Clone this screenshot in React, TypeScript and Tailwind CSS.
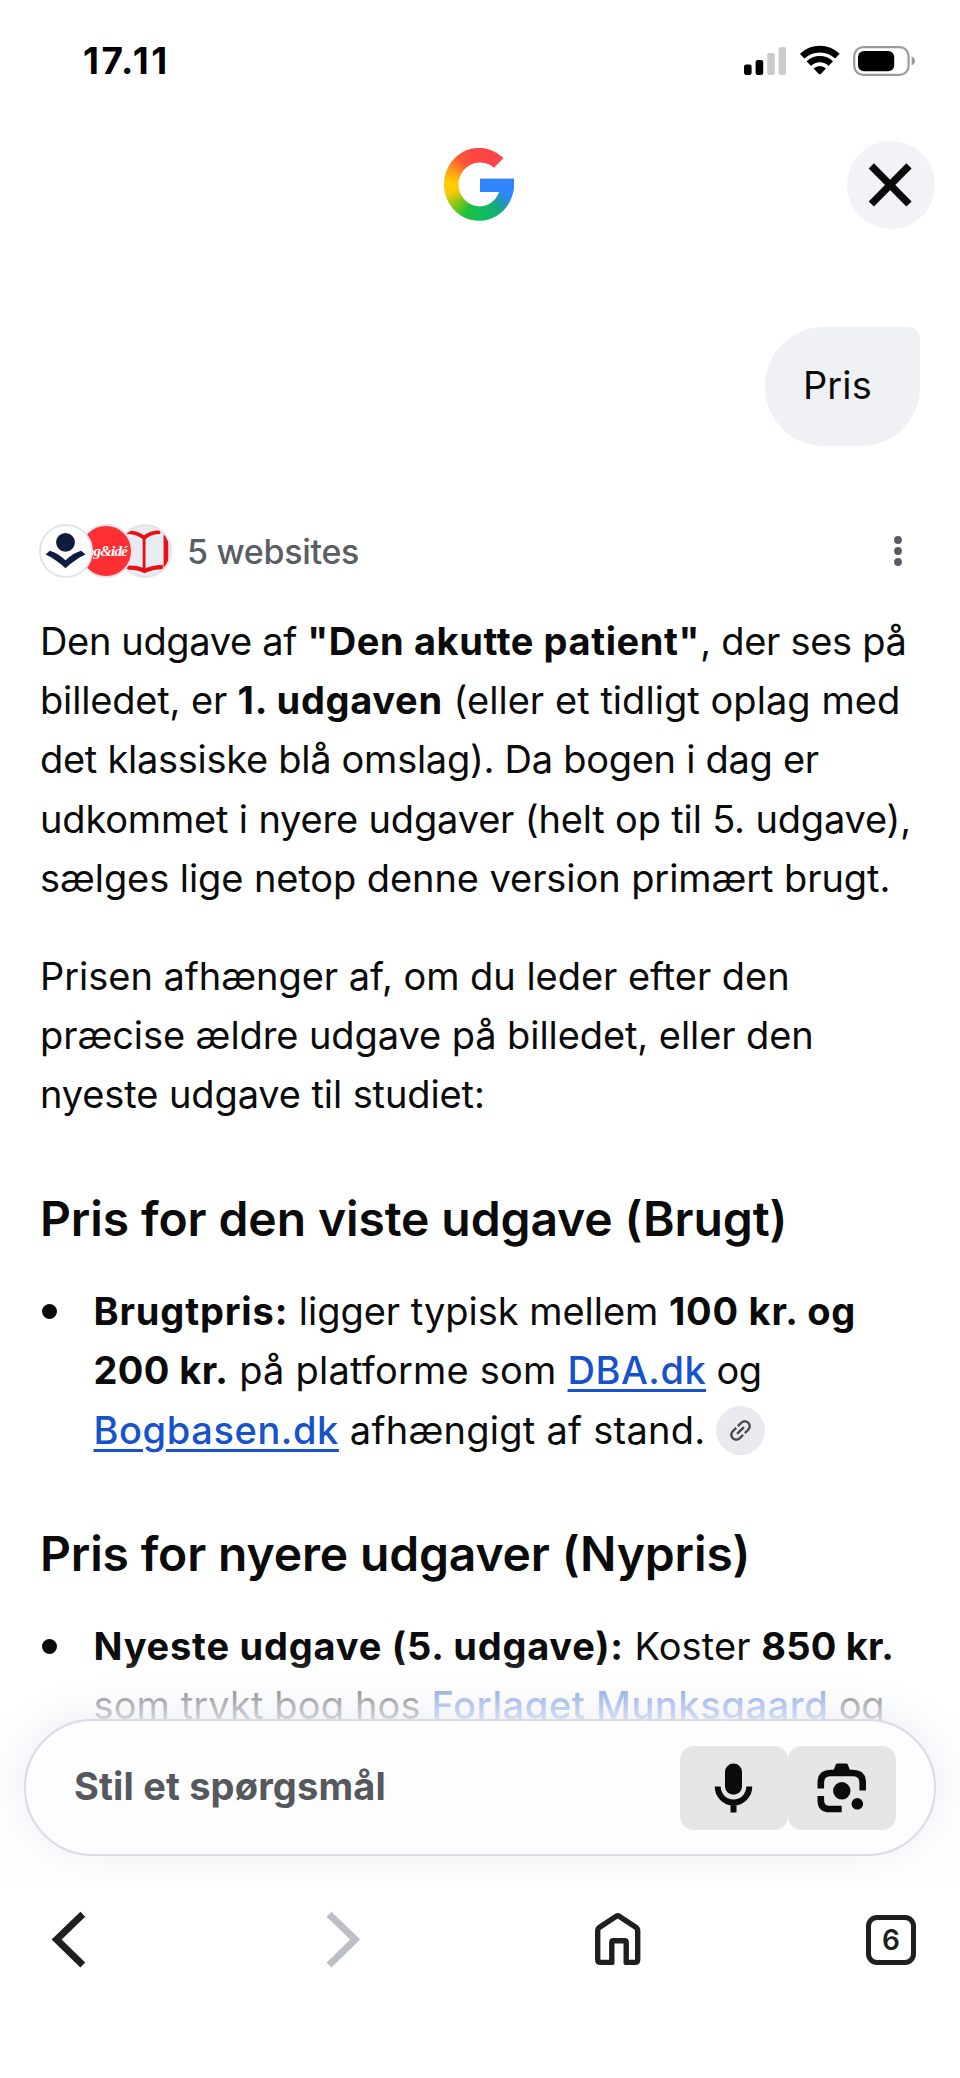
import type { ReactNode } from "react";

function SignalIcon() {
  return (
    <svg width="42" height="28" viewBox="0 0 42 28">
      <rect x="0" y="17.5" width="7.6" height="10.5" rx="2.2" fill="#000" />
      <rect x="11.6" y="13" width="7.6" height="15" rx="2.2" fill="#000" />
      <rect x="23.2" y="6" width="7.6" height="22" rx="2.2" fill="#cbcbcb" />
      <rect x="34.6" y="0" width="7.4" height="28" rx="2.2" fill="#cbcbcb" />
    </svg>
  );
}

function WifiIcon() {
  return (
    <svg width="40" height="30" viewBox="0 0 40 30" fill="none" stroke="#000" strokeWidth="6.4">
      <path d="M2.2 11.2 A25.4 25.4 0 0 1 37.4 11.2" strokeWidth="6.6" />
      <path d="M8.8 18.6 A15.8 15.8 0 0 1 30.8 18.6" />
      <path d="M13.6 23.6 A8.8 8.8 0 0 1 26 23.6 L20.8 28.9 Q19.8 29.8 18.8 28.9 Z" fill="#000" stroke="none" />
    </svg>
  );
}

function BatteryIcon() {
  return (
    <svg width="63" height="30" viewBox="0 0 63 30">
      <rect x="1.2" y="1.2" width="54.4" height="27.6" rx="9" fill="none" stroke="#9b9b9b" strokeWidth="2.2" />
      <rect x="5" y="5" width="36.2" height="20.2" rx="6" fill="#000" />
      <path d="M58.6 10.6 Q62 12 62 15 Q62 18 58.6 19.4 Z" fill="#9b9b9b" />
    </svg>
  );
}

function StatusBar() {
  return (
    <div className="flex h-[120px] justify-between pl-[83px] pr-[44px]">
      <span className="mt-[38px] text-[37px] leading-[46px] font-bold tracking-[2.6px] text-black">17.11</span>
      <div className="mt-[45px] flex h-[31px] items-start">
        <div className="mt-[2px]"><SignalIcon /></div>
        <div className="ml-[14px]"><WifiIcon /></div>
        <div className="ml-[13px] mt-[0.5px]"><BatteryIcon /></div>
      </div>
    </div>
  );
}

function Header() {
  return (
    <header className="grid h-[129px] grid-cols-[1fr_70px_1fr] items-center pr-[2px]">
      <span />
      <div
        role="img"
        aria-label="Google"
        className="h-[73px] w-[70px] [background:linear-gradient(#3186ff,#3186ff)_36px_30px/34px_14px_no-repeat,conic-gradient(from_0deg_at_36px_36.5px,#ff4641_0deg,#fc4450_50deg,#3186ff_70deg,#3186ff_108deg,#2095b8_128deg,#13b070_148deg,#0fbc5f_175deg,#1fc03c_205deg,#8cc714_232deg,#fdc907_255deg,#ffcc00_275deg,#ff9a1c_297deg,#ff5a33_320deg,#ff4641_345deg,#ff4641_360deg)] [clip-path:path('M59.4,10.2_A35,36.5_0_1_0_70,37_L70,30.7_L36,30.7_L36,44_L55,44_A20.6,21.5_0_0_1_36,58.4_A21.4,22_0_1_1_50,19.8_Z')]"
      />
      <button className="mr-[23px] flex size-[88px] items-center justify-center justify-self-end rounded-full bg-[#f2f2f7]">
        <svg width="48" height="48" viewBox="0 0 48 48" stroke="#0b0b0c" strokeWidth="7.4">
          <path d="M4.3 4.9 L42 43 M42 4.9 L4.3 43" />
        </svg>
      </button>
    </header>
  );
}

function SourceAvatars() {
  return (
    <div className="flex">
      <div className="z-20 size-[54px] overflow-hidden rounded-full border-[2.5px] border-[#e1e4eb] bg-white">
        <svg width="49" height="49" viewBox="0 0 48 48" fill="#0e1c40">
          <circle cx="24" cy="16" r="9.2" />
          <path d="M4.5 28 L8.6 24.2 C14 25.6 19 29 24 33.6 C29 29 34 25.6 39.4 24.2 L43.5 28 C36 31.5 29.8 36 24 41.5 C18.2 36 12 31.5 4.5 28 Z" />
        </svg>
      </div>
      <div className="z-10 -ml-[14.5px] flex size-[54px] items-center justify-center overflow-hidden rounded-full border-[2.5px] border-[#e1e4eb] bg-[#fd2f33]">
        <span className="-translate-x-[2px] whitespace-nowrap font-['Liberation_Serif',serif] text-[15px] leading-none font-bold tracking-[-0.8px] text-white italic">bog&amp;idé</span>
      </div>
      <div className="-ml-[14.5px] size-[54px] overflow-hidden rounded-full border-[2.5px] border-[#e1e4eb] bg-[#e9ebf2]">
        <svg width="49" height="49" viewBox="0 0 48 48" fill="none" stroke="#e90f12">
          <path d="M6 6 C13 6 19.5 8 23.6 11.5 C27.5 8 33 6 39.5 6" strokeWidth="3.8" />
          <path d="M23.6 10 V43" strokeWidth="2.8" />
          <path d="M5 41 C13 40.4 19 41.4 24 44 C29 41.4 35 40.4 42 40" strokeWidth="4.2" />
          <path d="M45 8 V42" strokeWidth="4.6" />
        </svg>
      </div>
    </div>
  );
}

function Line({ children }: { children: ReactNode }) {
  return <span className="block whitespace-nowrap">{children}</span>;
}

function Heading({ children, className }: { children: ReactNode; className: string }) {
  return <h2 className={`mt-[62.5px] whitespace-nowrap text-[48px] leading-[64px] font-semibold ${className}`}>{children}</h2>;
}

function Bullet({ children }: { children: ReactNode }) {
  return (
    <li className="mt-[31px] flex">
      <span className="mt-[22px] mr-[37px] ml-[1.5px] size-[15px] shrink-0 rounded-full bg-[#0b0b0c]" />
      <div>{children}</div>
    </li>
  );
}

const link = "font-medium text-[#1652cc] underline decoration-[2.5px] underline-offset-[5px]";

function Answer() {
  return (
    <article className="px-[40px] text-[38px] leading-[59.2px] text-[#0b0b0c]">
      <p>
        <Line>
          <span className="tracking-[-0.35px]">Den udgave af </span>
          <b className="tracking-[0.6px]">"Den akutte patient"</b>
          <span className="tracking-[-0.3px]">, der ses på</span>
        </Line>
        <Line>
          <span className="tracking-[-0.16px]">billedet, er </span>
          <b className="tracking-[0.68px]">1. udgaven</b>
          <span className="tracking-[0.05px]"> (eller et tidligt oplag med</span>
        </Line>
        <Line><span className="tracking-[-0.28px]">det klassiske blå omslag). Da bogen i dag er</span></Line>
        <Line><span className="tracking-[-0.17px]">udkommet i nyere udgaver (helt op til 5. udgave),</span></Line>
        <Line><span className="tracking-[-0.08px]">sælges lige netop denne version primært brugt.</span></Line>
      </p>
      <p className="mt-[39px]">
        <Line><span className="tracking-[-0.04px]">Prisen afhænger af, om du leder efter den</span></Line>
        <Line><span className="tracking-[-0.08px]">præcise ældre udgave på billedet, eller den</span></Line>
        <Line><span className="tracking-[-0.1px]">nyeste udgave til studiet:</span></Line>
      </p>
      <Heading className="tracking-[-0.1px]">Pris for den viste udgave (Brugt)</Heading>
      <ul>
        <Bullet>
          <Line>
            <b className="tracking-[0.85px]">Brugtpris:</b>
            <span className="tracking-[-0.03px]"> ligger typisk mellem </span>
            <b className="tracking-[0.75px]">100 kr. og</b>
          </Line>
          <Line>
            <b className="tracking-[0.4px]">200 kr.</b>
            <span className="tracking-[0.22px]"> på platforme som </span>
            <a className={`${link} tracking-[0.5px]`}>DBA.dk</a>
            <span className="tracking-[-0.4px]"> og</span>
          </Line>
          <Line>
            <a className={`${link} tracking-[0.6px]`}>Bogbasen.dk</a>
            <span className="tracking-[0.25px]"> afhængigt af stand.</span>
            <span className="-my-2 ml-[11px] inline-flex size-[49px] items-center justify-center rounded-full bg-[#e8eaf0] align-[-1.5px]">
              <svg width="29" height="29" viewBox="0 0 24 24" fill="#45474b" className="-rotate-45">
                <path d="M3.9 12c0-1.71 1.39-3.1 3.1-3.1h4V7H7c-2.76 0-5 2.24-5 5s2.24 5 5 5h4v-1.9H7c-1.71 0-3.1-1.39-3.1-3.1zM8 13h8v-2H8v2zm9-6h-4v1.9h4c1.71 0 3.1 1.39 3.1 3.1s-1.39 3.1-3.1 3.1h-4V17h4c2.76 0 5-2.24 5-5s-2.24-5-5-5z" />
              </svg>
            </span>
          </Line>
        </Bullet>
      </ul>
      <Heading className="tracking-[-0.15px]">Pris for nyere udgaver (Nypris)</Heading>
      <ul>
        <Bullet>
          <Line>
            <b className="tracking-[0.78px]">Nyeste udgave (5. udgave):</b>
            <span className="tracking-[0.1px]"> Koster </span>
            <b className="tracking-[0.17px]">850 kr.</b>
          </Line>
          <Line>
            <span className="tracking-[0.12px]">som trykt bog hos </span>
            <a className={`${link} tracking-[0.6px]`}>Forlaget Munksgaard</a>
            <span className="tracking-[-0.3px]"> og</span>
          </Line>
        </Bullet>
      </ul>
    </article>
  );
}

function Composer() {
  return (
    <div className="absolute inset-x-0 bottom-0 h-[232px]">
      <div className="absolute inset-0 bg-[linear-gradient(to_bottom,rgba(255,255,255,0)_0px,rgba(255,255,255,0.12)_14px,rgba(255,255,255,0.55)_34px,rgba(254,254,254,0.86)_66px,#fefefe_90px)]" />
      <div className="relative mx-[24px] mt-[65px] flex h-[137px] items-center rounded-full border-2 border-[#dadce5] bg-[#fdfdfe] pr-[38px] pl-[48px] shadow-[0_-4px_44px_rgba(90,110,170,0.11)]">
        <span className="-mt-[4px] flex-1 whitespace-nowrap text-[38px] leading-[46px] font-bold tracking-[0.15px] text-[#55585d]">Stil et spørgsmål</span>
        <button className="h-[84px] w-[108px] rounded-[14px] bg-[#e6e6e9]">
          <svg width="108" height="84" viewBox="0 0 108 84" fill="none" stroke="#0b0b0c" strokeWidth="6">
            <rect x="45" y="17.5" width="17" height="31.3" rx="8.5" fill="#0b0b0c" stroke="none" />
            <path d="M37.7 40.6 A15.8 15.8 0 0 0 69.3 40.6 M53.5 57 V66.5" />
          </svg>
        </button>
        <button className="h-[84px] w-[108px] rounded-[14px] bg-[#e6e6e9]">
          <svg width="108" height="84" viewBox="0 0 108 84" fill="none" stroke="#0b0b0c" strokeWidth="6.6">
            <path d="M32.8 42.5 V36.8 Q32.8 27 42.6 27 H64.9 Q74.7 27 74.7 36.8 V44.5" />
            <path d="M32.8 50.1 V54.2 Q32.8 63 41.6 63 H53.7" />
            <path d="M45 25.6 L48 18.2 Q48.4 17.5 49.4 17.5 H58.2 Q59.2 17.5 59.6 18.2 L62.6 25.6 Z" fill="#0b0b0c" stroke="none" />
            <circle cx="53.8" cy="44.8" r="8.7" fill="#0b0b0c" stroke="none" />
            <circle cx="69.3" cy="57.8" r="5.8" fill="#0b0b0c" stroke="none" />
          </svg>
        </button>
      </div>
    </div>
  );
}

function NavBar() {
  return (
    <nav className="flex h-[192px] items-start justify-between bg-white pt-[25px] pr-[44px] pl-[51px]">
      <svg width="36" height="58" viewBox="0 0 36 58" fill="none" stroke="#1f1f1f" strokeWidth="7">
        <path d="M31.8 3.2 L5.6 28.6 L31.8 54" />
      </svg>
      <svg width="36" height="58" viewBox="0 0 36 58" fill="none" stroke="#bcbfc5" strokeWidth="7" className="ml-[13px]">
        <path d="M4 3.2 L30.2 28.6 L4 54" />
      </svg>
      <svg width="46" height="58" viewBox="0 0 46 58" fill="none" stroke="#1f1f1f" strokeWidth="5.4" strokeLinejoin="round" className="ml-[10px]">
        <path d="M2.7 20 Q2.7 17.6 4.6 16.3 L21.3 5.2 Q22.7 4.2 24.1 5.2 L40.8 16.3 Q42.7 17.6 42.7 20 V48.6 Q42.7 51.4 40 51.4 H31.2 V31.4 Q31.2 29.8 29.6 29.8 H18.4 Q16.8 29.8 16.8 31.4 V51.4 H5.4 Q2.7 51.4 2.7 48.6 Z" />
      </svg>
      <div className="mt-[4px] flex size-[50px] items-center justify-center rounded-[11px] border-[5px] border-[#1f1f1f] text-[28px] leading-none font-semibold text-[#1f1f1f]">6</div>
    </nav>
  );
}

export default function App() {
  return (
    <div className="h-[2078px] w-[960px] overflow-hidden bg-white font-['Inter',sans-serif]">
      <div className="relative h-[1886px] overflow-hidden">
        <StatusBar />
        <Header />
        <div className="mt-[78px] flex justify-end pr-[40px]">
          <div className="h-[119px] w-[155px] rounded-[59px] rounded-tr-[12px] bg-[#eff1f5] pt-[35px] pl-[38px] text-[38px] leading-[46px] tracking-[0.1px] text-[#0b0b0c]">Pris</div>
        </div>
        <div className="mt-[78px] flex h-[54px] items-center pr-[57px] pl-[39px]">
          <SourceAvatars />
          <span className="mt-[2px] ml-[15px] flex-1 text-[34px] leading-[42px] font-medium tracking-[-0.3px] text-[#5a5d62]">5 websites</span>
          <svg width="10" height="32" viewBox="0 0 10 32" fill="#5a5c62">
            <circle cx="5" cy="5" r="3.9" />
            <circle cx="5" cy="16" r="3.9" />
            <circle cx="5" cy="27" r="3.9" />
          </svg>
        </div>
        <div className="mt-[34px]">
          <Answer />
        </div>
        <Composer />
      </div>
      <NavBar />
    </div>
  );
}
